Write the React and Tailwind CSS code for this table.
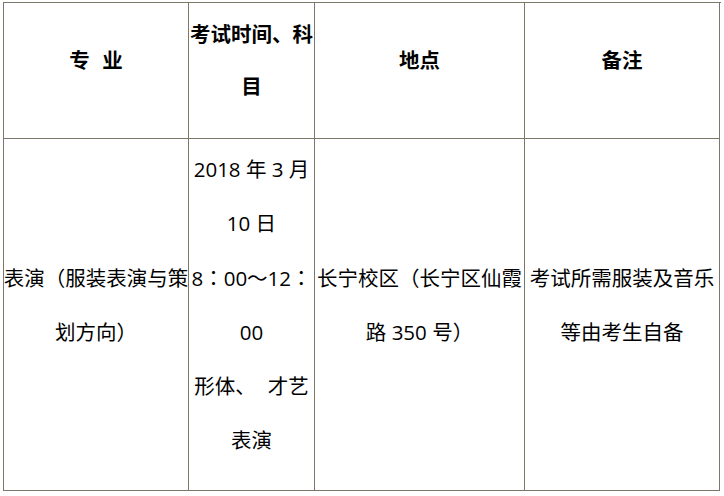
const font = { fontFamily: '"Open Sans", "Noto Sans CJK SC", sans-serif' };

function HeadCell({ children }) {
  return (
    <div className="flex items-center justify-center border-r border-b border-[#7b776b] pb-[22px] text-center text-[20.5px] leading-[52px] font-bold text-black whitespace-nowrap">
      <div>{children}</div>
    </div>
  );
}

function BodyCell({ lines }) {
  return (
    <div className="flex items-center justify-center border-r border-b border-[#7b776b] pb-[20px] text-center text-[20.5px] leading-[54px] text-black whitespace-nowrap">
      <div>
        {lines.map((l, i) => (
          <div key={i}>{l}</div>
        ))}
      </div>
    </div>
  );
}

// centred full-width punctuation, as the original face draws it
function P({ children }) {
  return <span style={{ fontFamily: '"Noto Sans CJK TC", sans-serif' }}>{children}</span>;
}

export default function App() {
  return (
    <div className="w-[724px] h-[496px] bg-white pt-[2px] pl-[3px]" style={font}>
      <div className="grid grid-cols-[185px_126px_210px_195px] grid-rows-[136px_352px] w-[717px] border-l border-t border-[#7b776b] box-content">
        <HeadCell>
          专<span className="inline-block w-[12.5px]" />业
        </HeadCell>
        <HeadCell>
          <div>考试时间、科</div>
          <div>目</div>
        </HeadCell>
        <HeadCell>地点</HeadCell>
        <HeadCell>备注</HeadCell>

        <BodyCell lines={['表演（服装表演与策', '划方向）']} />
        <BodyCell
          lines={[
            '2018 年 3 月',
            '10 日',
            <>8<P>：</P>00<P>～</P>12<P>：</P></>,
            '00',
            <>形体、<span className="inline-block w-[12px]" />才艺</>,
            '表演',
          ]}
        />
        <BodyCell lines={['长宁校区（长宁区仙霞', '路 350 号）']} />
        <BodyCell lines={['考试所需服装及音乐', '等由考生自备']} />
      </div>
    </div>
  );
}
